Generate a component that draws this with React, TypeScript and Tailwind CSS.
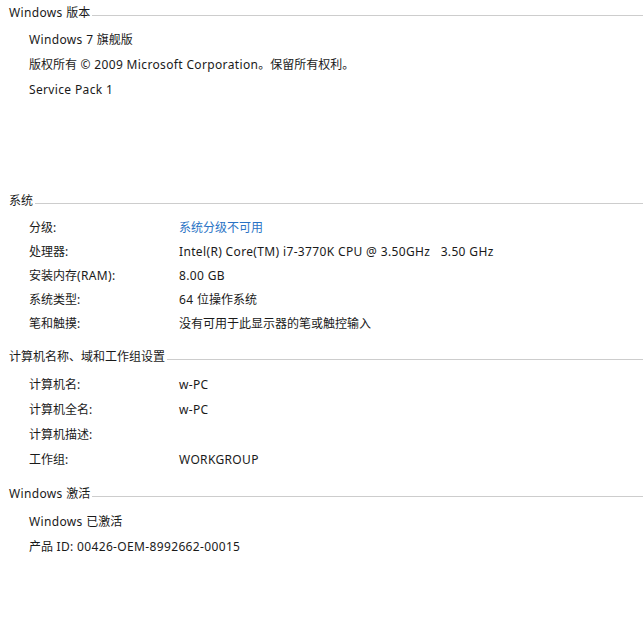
import React from "react";

const font = {
  fontFamily: '"Noto Sans", "Noto Sans CJK SC", sans-serif',
};

function T({ text }: { text: string }) {
  const parts = text.split(/([\u3000-\u303f\u4e00-\u9fff\uff00-\uffef]+)/).filter((p) => p.length > 0);
  return (
    <>
      {parts.map((p, i) =>
        /[\u3000-\u303f\u4e00-\u9fff\uff00-\uffef]/.test(p) ? (
          <span key={i}>{p}</span>
        ) : (
          <span key={i} className="tracking-[0.35px]">
            {p}
          </span>
        )
      )}
    </>
  );
}

function Header({ title, className = "" }: { title: string; className?: string }) {
  return (
    <div className={`flex items-center h-[24px] pl-[9px] ${className}`}>
      <span className="whitespace-nowrap mt-[1px]">
        <T text={title} />
      </span>
      <div className="flex-1 h-px bg-[#cdcdcd] ml-[2px] mt-[7px]" />
    </div>
  );
}

function Row({
  label,
  value,
  h,
  link,
}: {
  label: string;
  value?: string;
  h: string;
  link?: boolean;
}) {
  return (
    <div className={`flex items-center pl-[29px] ${h}`}>
      <span className="w-[150px] whitespace-nowrap">
        <T text={label} />
      </span>
      {value !== undefined && (
        <span className={`whitespace-pre ${link ? "text-[#2a73c5]" : ""}`}>
          <T text={value} />
        </span>
      )}
    </div>
  );
}

function Line({ text }: { text: string }) {
  return (
    <div className="flex items-center pl-[29px] h-[25px]">
      <span className="whitespace-nowrap">
        <T text={text} />
      </span>
    </div>
  );
}

export default function App() {
  return (
    <div
      className="w-[643px] h-[620px] bg-white text-[#1a1a1a] text-[12px] leading-none overflow-hidden"
      style={font}
    >
      <Header title="Windows 版本" />
      <div className="mt-[3px]">
        <Line text="Windows 7 旗舰版" />
        <Line text="版权所有 © 2009 Microsoft Corporation。保留所有权利。" />
        <Line text="Service Pack 1" />
      </div>

      <Header title="系统" className="mt-[86px]" />
      <div className="mt-[4px]">
        <Row h="h-[24px]" label="分级:" value="系统分级不可用" link />
        <Row h="h-[24px]" label="处理器:" value="Intel(R) Core(TM) i7-3770K CPU @ 3.50GHz   3.50 GHz" />
        <Row h="h-[24px]" label="安装内存(RAM):" value="8.00 GB" />
        <Row h="h-[24px]" label="系统类型:" value="64 位操作系统" />
        <Row h="h-[24px]" label="笔和触摸:" value="没有可用于此显示器的笔或触控输入" />
      </div>

      <Header title="计算机名称、域和工作组设置" className="mt-[8px]" />
      <div className="mt-[4px]">
        <Row h="h-[25px]" label="计算机名:" value="w-PC" />
        <Row h="h-[25px]" label="计算机全名:" value="w-PC" />
        <Row h="h-[25px]" label="计算机描述:" />
        <Row h="h-[25px]" label="工作组:" value="WORKGROUP" />
      </div>

      <Header title="Windows 激活" className="mt-[9px]" />
      <div className="mt-[4px]">
        <Line text="Windows 已激活" />
        <Line text="产品 ID: 00426-OEM-8992662-00015" />
      </div>
    </div>
  );
}
